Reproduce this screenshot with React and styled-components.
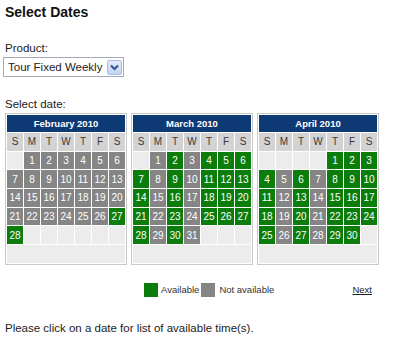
import React from "react";
import styled, { createGlobalStyle } from "styled-components";

const GlobalStyle = createGlobalStyle`
  body {
    margin: 0;
    background: #fff;
    font-family: "Liberation Sans", Arial, sans-serif;
    color: #222;
  }
`;

const Page = styled.div`
  padding: 4px 0 0 5px;
  width: 395px;
`;

const Title = styled.h1`
  margin: 0;
  font-size: 14px;
  line-height: 16px;
  font-weight: bold;
  color: #111;
`;

const Label = styled.div`
  margin-top: ${(p) => p.$top}px;
  font-size: 11.5px;
  line-height: 14px;
  color: #222;
`;

const Select = styled.div`
  margin: 2px 0 0 -2px;
  width: 121px;
  height: 20px;
  box-sizing: border-box;
  border: 1px solid #a3a9b5;
  display: flex;
  align-items: center;
  justify-content: space-between;
  padding: 0 1px 0 4px;
  font-size: 11.5px;
  color: #222;
  background: #fff;
`;

const Arrow = styled.div`
  width: 15px;
  height: 15px;
  box-sizing: border-box;
  border: 1px solid #a9bde6;
  border-radius: 2px;
  background: linear-gradient(#e3ebfb, #c3d3f3);
  display: flex;
  align-items: center;
  justify-content: center;
`;

const Calendars = styled.div`
  margin-top: 2px;
  display: flex;
  gap: 4px;
`;

const Month = styled.div`
  width: 122px;
  box-sizing: border-box;
  border: 1px solid #c9c9c9;
  padding: 1px;
  background: #fff;
`;

const MonthHead = styled.div`
  height: 17px;
  background: #0d3a74;
  color: #fff;
  font-size: 9.5px;
  font-weight: bold;
  display: flex;
  align-items: center;
  justify-content: center;
`;

const Grid = styled.div`
  margin-top: 1px;
  display: grid;
  grid-template-columns: repeat(7, 16px);
  grid-auto-rows: 17.7px;
  gap: 1px;
`;

const cellColors = {
  dow: "#d3d3d3",
  on: "#0b7d0b",
  off: "#858585",
  empty: "#ececec",
};

const Cell = styled.div`
  background: ${(p) => cellColors[p.$kind]};
  color: ${(p) => (p.$kind === "dow" ? "#3a3a3a" : "#fff")};
  font-size: 10px;
  display: flex;
  align-items: center;
  justify-content: center;
`;

const Filler = styled.div`
  grid-column: 1 / -1;
  background: #ececec;
`;

const LegendRow = styled.div`
  margin-top: 18px;
  width: 373px;
  height: 14px;
  display: flex;
  align-items: center;
  font-size: 9.5px;
  color: #333;
`;

const Legend = styled.div`
  margin-left: 139px;
  display: flex;
  align-items: center;
`;

const Swatch = styled.span`
  width: 14px;
  height: 14px;
  background: ${(p) => cellColors[p.$kind]};
  margin: 0 ${(p) => p.$gap}px 0 ${(p) => p.$lead}px;
`;

const Next = styled.a`
  margin-left: auto;
  margin-right: 6px;
  color: #222;
  text-decoration: underline;
  cursor: pointer;
`;

const Hint = styled.p`
  margin: 24px 0 0;
  font-size: 11.5px;
  line-height: 14px;
  color: #222;
`;

const DOW = ["S", "M", "T", "W", "T", "F", "S"];

const months = [
  { name: "February 2010", start: 1, days: 28, open: (d) => d >= 27 },
  { name: "March 2010", start: 1, days: 31, open: (d, wd) => wd !== 1 && wd !== 3 },
  { name: "April 2010", start: 4, days: 30, open: (d, wd) => wd !== 1 && wd !== 3 },
];

const MonthCalendar = ({ month }) => {
  const cells = [];
  for (let i = 0; i < 35; i++) {
    const day = i - month.start + 1;
    if (day < 1 || day > month.days) {
      cells.push(<Cell key={i} $kind="empty" />);
    } else {
      const kind = month.open(day, i % 7) ? "on" : "off";
      cells.push(
        <Cell key={i} $kind={kind}>
          {day}
        </Cell>
      );
    }
  }
  return (
    <Month>
      <MonthHead>{month.name}</MonthHead>
      <Grid>
        {DOW.map((d, i) => (
          <Cell key={"d" + i} $kind="dow">
            {d}
          </Cell>
        ))}
        {cells}
        <Filler />
      </Grid>
    </Month>
  );
};

export default function App() {
  return (
    <>
      <GlobalStyle />
      <Page>
        <Title>Select Dates</Title>
        <Label $top={21}>Product:</Label>
        <Select>
          <span>Tour Fixed Weekly</span>
          <Arrow>
            <svg width="9" height="7" viewBox="0 0 9 7">
              <path d="M1 1.5 L4.5 5 L8 1.5" fill="none" stroke="#34508c" strokeWidth="2" />
            </svg>
          </Arrow>
        </Select>
        <Label $top={20}>Select date:</Label>
        <Calendars>
          {months.map((m) => (
            <MonthCalendar key={m.name} month={m} />
          ))}
        </Calendars>
        <LegendRow>
          <Legend>
            <Swatch $kind="on" $lead={0} $gap={3} />
            Available
            <Swatch $kind="off" $lead={2} $gap={4} />
            Not available
          </Legend>
          <Next>Next</Next>
        </LegendRow>
        <Hint>Please click on a date for list of available time(s).</Hint>
      </Page>
    </>
  );
}
